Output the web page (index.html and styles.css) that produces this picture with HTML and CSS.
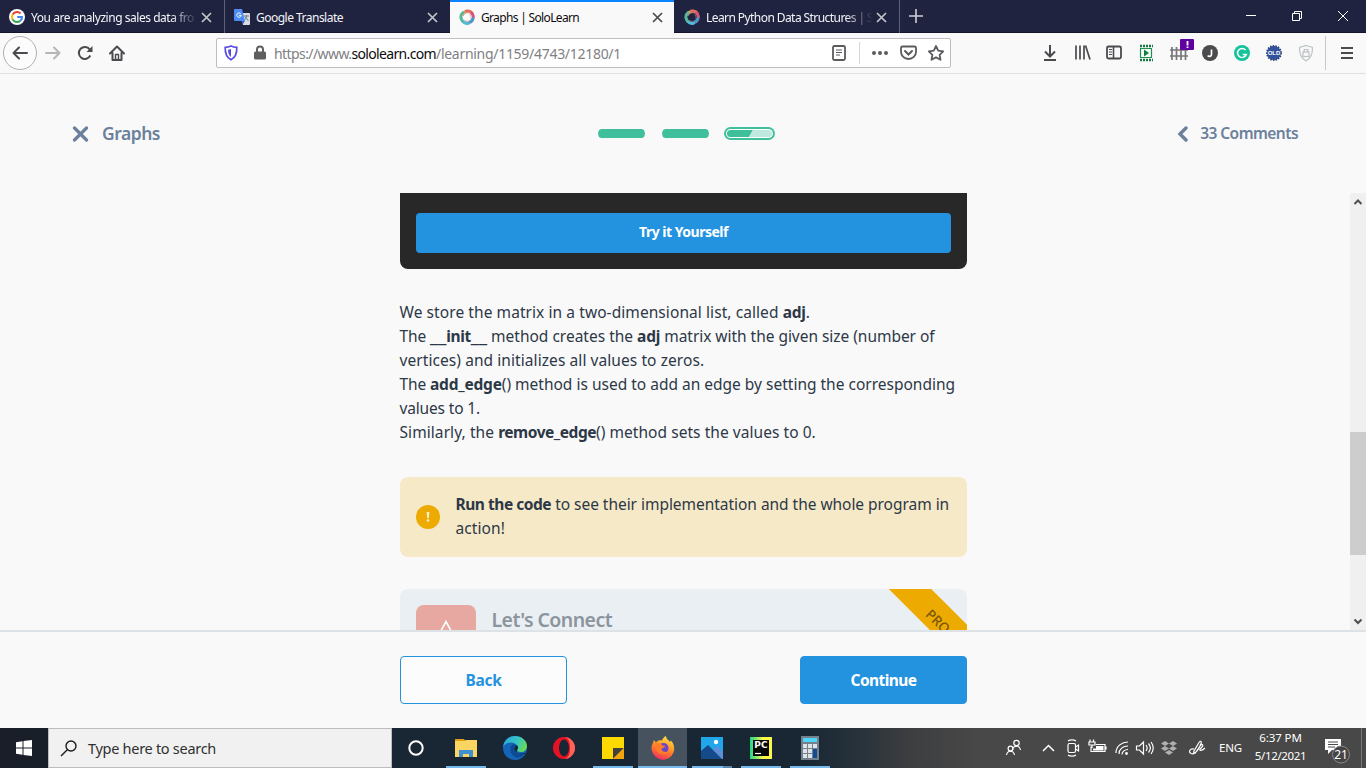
FILE: index.html
```
<!DOCTYPE html>
<html lang="en">
<head>
<meta charset="utf-8">
<title>Graphs | SoloLearn</title>
<link rel="stylesheet" href="styles.css">
</head>
<body>
<svg width="0" height="0" class="defs">
  <defs>
    <g id="swirl" fill="none" stroke-width="2.700" stroke-linecap="round">
      <path d="M3 5.500C5 2 9 1.400 12 3" stroke="#e8a254"/><path d="M7 2C11 1 14.500 4 14.300 7.500" stroke="#e56b5d"/>
      <path d="M12.500 4C15.500 7 14.500 11 12 13" stroke="#d9537c"/><path d="M14 9.500C12.500 14 8.500 15 5.500 13.700" stroke="#3a9fd0"/>
      <path d="M9.500 14.500C4.500 15 2 11.500 2 8.500" stroke="#55bcd8"/><path d="M3.500 12C.8 9 1.500 5.500 4 3.500" stroke="#52b99b"/>
      <path d="M4 7C5 4.500 7 3.500 9 3.700M10 4.500C12 6 12.500 8 12 10M11 11.500C9.500 13 7 12.700 5.500 11.500" stroke="#b98a8a" stroke-width=".7"/>
    </g>
    <g id="x" fill="none" stroke-width="1.700"><path d="M1 1l9 9M10 1l-9 9"/></g>
  </defs>
</svg>
<div class="screen">
  <div class="tabs">
    <div class="tab">
      <svg class="fav" viewBox="0 0 16 16"><circle cx="8" cy="8" r="8" fill="#fff"/><g fill="none" stroke-width="2"><path d="M11.600 4.500A5 5 0 0 0 3.600 5.600" stroke="#ea4335"/><path d="M3.600 5.600a5 5 0 0 0 0 4.800" stroke="#fbbc05"/><path d="M3.600 10.400a5 5 0 0 0 7.700 1.400" stroke="#34a853"/><path d="M11.300 11.800A5 5 0 0 0 13 8H8.200" stroke="#4285f4"/></g></svg>
      <span class="title fade t-query">You are analyzing sales data fro</span>
      <svg class="close" viewBox="0 0 11 11" stroke="#c4c4cc"><use href="#x"/></svg>
    </div>
    <div class="tab">
      <svg class="fav" viewBox="0 0 16 16"><path d="M7 4h8a1 1 0 0 1 1 1v10a1 1 0 0 1-1 1H9z" fill="#dadce0"/><path d="M1 0h7l3 12H1a1 1 0 0 1-1-1V1a1 1 0 0 1 1-1z" fill="#4c8bf5"/><path d="M7.500 12H11l-2 3z" fill="#3367d6"/><path d="M6.700 4.700a2.200 2.200 0 1 0 .5 1.600H5" fill="none" stroke="#fff"/><path d="M10 7h5M12.500 6v1c0 2-1 3-2 4M11.500 8l3 4" fill="none" stroke="#6d7b8c"/></svg>
      <span class="title t-translate">Google Translate</span>
      <svg class="close" viewBox="0 0 11 11" stroke="#c4c4cc"><use href="#x"/></svg>
    </div>
    <div class="tab active">
      <svg class="fav" viewBox="0 0 16 16"><use href="#swirl"/></svg>
      <span class="title t-graphs">Graphs | SoloLearn</span>
      <svg class="close" viewBox="0 0 11 11" stroke="#4a4a4f"><use href="#x"/></svg>
    </div>
    <div class="tab last">
      <svg class="fav" viewBox="0 0 16 16"><use href="#swirl"/></svg>
      <span class="title fade t-learn">Learn Python Data Structures | S</span>
      <svg class="close" viewBox="0 0 11 11" stroke="#c4c4cc"><use href="#x"/></svg>
    </div>
    <svg class="plus" viewBox="0 0 14 14"><path d="M7 0v14M0 7h14" stroke="#d0d0d8" stroke-width="1.600"/></svg>
    <svg class="winctl" viewBox="0 0 104 12" fill="none" stroke="#fff"><path d="M0 5.500h10M46.500 3.500h7v7h-7zM48.500 3.500v-2h7v7h-2M92 1l10 10M102 1L92 11"/></svg>
  </div>

  <div class="toolbar">
    <div class="nav">
      <span class="back"><svg width="16" height="14" viewBox="0 0 16 14" fill="none" stroke="#4a4a4f" stroke-width="2" stroke-linecap="round" stroke-linejoin="round"><path d="M15 7H1.500M7 1.500L1.500 7 7 12.500"/></svg></span>
      <svg width="16" height="14" viewBox="0 0 16 14" fill="none" stroke="#b6b6b8" stroke-width="2" stroke-linecap="round" stroke-linejoin="round"><path d="M1 7h13.500M9 1.500L14.500 7 9 12.500"/></svg>
      <svg width="16" height="16" viewBox="0 0 16 16" fill="none" stroke="#4a4a4f" stroke-width="2"><path d="M13.300 10.500A6 6 0 1 1 12.700 4.300"/><path d="M15.500 1v6H9.500z" fill="#4a4a4f" stroke="none"/></svg>
      <svg width="16" height="16" viewBox="0 0 16 16" fill="none" stroke="#4a4a4f" stroke-width="2" stroke-linejoin="round" stroke-linecap="round"><path d="M1 8.500L8 1.500l7 7M3.500 8v7h9V8"/><path d="M6.500 14.500V9.500h3v5h-2" stroke-width="1.400"/></svg>
    </div>
    <div class="urlbar">
      <svg class="shield" width="14" height="16" viewBox="0 0 14 16"><path d="M7 1C9 2 11 2.300 12.800 2.300 13 8 11.500 12.500 7 14.800 2.500 12.500 1 8 1.200 2.300 3 2.300 5 2 7 1z" fill="#fff" stroke="#5a4be0" stroke-width="1.700"/><path d="M7 4c-1 .4-2 .6-3 .7.1 3.300.9 5.800 3 7.300z" fill="#5150dc"/></svg>
      <svg class="lock" width="12" height="15" viewBox="0 0 12 15"><rect y="6.500" width="12" height="8" rx="1.500" fill="#5f5f61"/><path d="M3 7V4.500a3 3 0 0 1 6 0V7" fill="none" stroke="#5f5f61" stroke-width="2"/></svg>
      <span class="url"><span class="scheme">https://www.</span><b>sololearn.com</b><span class="path">/learning/1159/4743/12180/1</span></span>
      <svg class="urlicons" width="112" height="24" viewBox="0 0 112 24" fill="none" stroke="#5b5b5f" stroke-width="1.800"><rect x="1" y="5" width="12" height="14" rx="1.500"/><path d="M4 9h6M4 11.500h6M4 14h4" stroke-width="1"/><path d="M27.500 1v22" stroke="#d7d7db" stroke-width="1"/><g fill="#5b5b5f" stroke="none"><circle cx="42" cy="12" r="2"/><circle cx="48" cy="12" r="2"/><circle cx="54" cy="12" r="2"/></g><path d="M70.500 5.500h12a1.500 1.500 0 0 1 1.500 1.500v4a7.500 7 0 0 1-15 0V7a1.500 1.500 0 0 1 1.500-1.500z"/><path d="M73 10l3.500 3.500L80 10" stroke-linecap="round" stroke-width="2"/><path d="M104 5l2.200 4.600 5 .7-3.600 3.500.9 5-4.500-2.400-4.500 2.400.9-5-3.600-3.500 5-.7z" stroke-linejoin="round"/></svg>
    </div>
    <svg class="ext" width="322" height="34" viewBox="0 0 322 34" fill="none" stroke="#4a4a4f" stroke-width="2">
      <path d="M8 9v11M3 15.500L8 20.500l5-5M2 24h12"/>
      <path d="M34 9.500v14M38 9.500v14M42 9.500v14M43.500 9.500L48 23.500" stroke-width="1.700"/>
      <rect x="65" y="10.500" width="14" height="12" rx="1.500" stroke-width="1.800"/><path d="M71.500 10v13" stroke-width="1.600"/><path d="M67 13.500h3M67 16h3M67 18.500h3" stroke-width="1"/>
      <path d="M98.500 13v8M109.500 13v8" stroke="#1d9150" stroke-width="1.200"/><path d="M98 12.500h12M98 21.500h12" stroke="#1d9150" stroke-width="1"/><path d="M98 10h13M98 24h13" stroke="#157a3f" stroke-width="2.500" stroke-dasharray="2 1"/><path d="M102 13.500v7l5-3.500z" fill="#0c8140" stroke="none"/>
      <path d="M130 11v13M134.500 11v13M139 11v13M143.500 11v13M128 14h18M128 20h18" stroke="#77777b" stroke-width="1.700"/>
      <rect x="138" y="3" width="14" height="11" rx="1" fill="#60009e" stroke="none"/><path d="M145.500 5v4.500M145.500 10.500V12" stroke="#fff" stroke-width="1.800"/>
      <circle cx="168" cy="17" r="8" fill="#4b4b4d" stroke="none"/><path d="M169.500 13.500v5a2 2 0 0 1-3.700 1" stroke="#fff" stroke-width="1.700"/>
      <circle cx="200" cy="17" r="8" fill="#15c39a" stroke="none"/><path d="M203.500 14a4.500 4.500 0 1 0 .8 4.500h-3.500" stroke="#fff" stroke-width="1.500"/>
      <circle cx="232" cy="17" r="7" fill="#30539b" stroke="none"/><circle cx="232" cy="17" r="7.200" stroke="#253c72" stroke-dasharray="1.500 1.200" stroke-width="1.500"/><text x="232" y="19.200" text-anchor="middle" class="old">OLD</text>
      <path d="M264 9.500l6.500 2c.2 6-1 10.500-6.500 13.500-5.500-3-6.700-7.500-6.500-13.500z" stroke="#bcc4c4" stroke-width="1.200"/><rect x="261" y="16" width="6" height="4.500" stroke="#bcc0c2" stroke-width="1.200"/><path d="M262.200 16v-2.500h3.600V16" stroke="#bcc0c2" stroke-width="1.200"/>
      <path d="M283.500 0v34" stroke="#c8c8ca" stroke-width="1"/>
      <path d="M299 12h12M299 17h12M299 22h12"/>
    </svg>
  </div>

  <div class="lesson-head">
    <svg class="quit" width="17" height="16" viewBox="-.5 0 17 16"><path d="M2 2l12 12M14 2L2 14" stroke="#6b809a" stroke-width="3.200" stroke-linecap="round"/></svg>
    <span class="topic">Graphs</span>
    <div class="steps"><i class="step"></i><i class="step"></i><i class="step current"><i></i></i></div>
    <div class="comments"><svg width="11" height="16" viewBox="0 0 11 16"><path d="M9 2L3 8l6 6" fill="none" stroke="#6b809a" stroke-width="3.400" stroke-linecap="round"/></svg><span>33 Comments</span></div>
  </div>

  <div class="scroll">
    <div class="content">
      <div class="code"><button class="try">Try it Yourself</button></div>
      <div class="prose">
        <p><span class="wider">We store the matrix in a two-dimensional list, called </span><b>adj</b>.</p>
        <p><span class="the">The </span><b class="dunder"><i>__</i>init<i>__</i></b> method creates the <b>adj</b><span class="snug"> matrix with the given size (number of</span></p>
        <p><span class="wider">vertices) and initializes all values to zeros.</span></p>
        <p><span class="the">The </span><b>add_edge</b><span>() method is used to add an edge by setting the corresponding</span></p>
        <p><span class="tight">values to 1.</span></p>
        <p><span class="wider">Similarly, the </span><b class="tightest">remove_edge</b><span class="wide">() method sets the values to 0.</span></p>
      </div>
      <div class="note">
        <svg width="24" height="24" viewBox="0 0 24 24"><circle cx="12" cy="12" r="12" fill="#edaa00"/><path d="M10.600 7h2.800l-.6 6.200h-1.600z" fill="#f8ecd0"/><circle cx="12" cy="15.500" r="1.300" fill="#f8ecd0"/></svg>
        <div><p><b class="tightest">Run the code</b><span class="snug"> to see their implementation and the whole program in</span></p><p><span class="wider">action!</span></p></div>
      </div>
      <div class="card">
        <div class="badge"><svg width="20" height="20" viewBox="0 0 20 20"><path d="M3.500 13.500L10 1.500l6.500 12" fill="none" stroke="#fff" stroke-width="1.600"/></svg></div>
        <span class="cardtitle">Let's Connect</span>
        <div class="ribbon">PRO</div>
      </div>
    </div>
    <div class="scrollbar"><svg width="16" height="17" viewBox="0 0 16 17"><path d="M4.500 11L8 7.500l3.500 3.500" fill="none" stroke="#505050" stroke-width="2"/></svg><i class="thumb"></i><svg width="16" height="17" viewBox="0 0 16 17"><path d="M4.500 6.500L8 10l3.500-3.500" fill="none" stroke="#505050" stroke-width="2"/></svg></div>
  </div>

  <div class="actions"><button class="btn">Back</button><button class="btn primary">Continue</button></div>

  <div class="taskbar">
    <div class="start"><svg width="16" height="16" viewBox="0 0 16 16" fill="#fff"><path d="M0 2.200L6.500 1.300V7.500H0zM7.500 1.100L16 0v7.500H7.500zM0 8.500h6.500v6.200L0 13.800zM7.500 8.500H16V16l-8.500-1.100z"/></svg></div>
    <div class="search"><svg width="17" height="17" viewBox="0 0 17 17" fill="none" stroke="#1b1b1b" stroke-width="1.400"><circle cx="11" cy="6" r="5"/><path d="M7.300 9.700L1 16"/></svg><span>Type here to search</span></div>
    <div class="apps">
      <div class="app cortana"><svg width="24" height="24" viewBox="0 0 24 24"><circle cx="12" cy="12" r="6.700" fill="none" stroke="#fff" stroke-width="2"/></svg></div>
      <div class="app run"><svg width="24" height="24" viewBox="0 0 24 24"><path d="M1 3h9l1.500 2H1z" fill="#e0a012"/><path d="M1 5h9l2-1h11v17H1z" fill="#fcd462"/><path d="M5 21v-7h14v7h-4v-3H9v3z" fill="#3f90d2"/></svg></div>
      <div class="app"><svg width="24" height="24" viewBox="0 0 24 24"><defs><linearGradient id="eg" x1="0" x2="1" y1=".2" y2=".5"><stop stop-color="#2ba7df"/><stop offset=".6" stop-color="#36c6c0"/><stop offset="1" stop-color="#6ada55"/></linearGradient></defs><circle cx="12" cy="12" r="12" fill="#1464b8"/><path d="M0 11C1 4 6 0 12 0c7 0 12 5 12 10 0 4-3 6-6 6-3 0-4-1-4-2 1-1 1-2 1-3C14 8 11 6.500 8 6.500 4 6.500 1 9 0 11z" fill="url(#eg)"/><path d="M9 9c-3 3-2 9 3 12 4 2 8-1 10-4-4 2-9 1-10-3-.4-2 1-3 1.500-3.500C13 8.500 10.500 8 9 9z" fill="#0c4a91"/><path d="M14 14c1-1 1-2 1-3-.5-1.500-1.800-1.800-2.500-1-1 1.500-1 3-.3 4.500 1.800 3.500 7.800 3.500 10.500 2l-.5 1.200C18 19 13 17 14 14z" fill="#182733"/></svg></div>
      <div class="app"><svg width="24" height="24" viewBox="0 0 24 24"><ellipse cx="12" cy="12" rx="11" ry="11" fill="#e61224"/><path d="M12 1a11 11 0 0 1 0 22c5-1 6-6 6-11S17 2 12 1z" fill="#ff6357"/><ellipse cx="12" cy="12" rx="5" ry="8.500" fill="#182733"/></svg></div>
      <div class="app run"><svg width="24" height="24" viewBox="0 0 24 24"><path d="M1 1h22v22H1z" fill="#ffd900"/><path d="M12 12h11L12 23z" fill="#43413b"/><path d="M23 12v11H12z" fill="#f2a60c"/></svg></div>
      <div class="app run on"><svg width="24" height="24" viewBox="0 0 24 24"><defs><linearGradient id="fg" x1=".7" x2=".3" y1="0" y2="1"><stop stop-color="#ffe546"/><stop offset=".5" stop-color="#ff8b25"/><stop offset="1" stop-color="#f52961"/></linearGradient></defs><path d="M1.500 8L3 4l2 2.500C7 4 9 4 11 4.500 11.500 2.500 13 1 15 0c0 3 3 4 4 6l1-1.500c3 3 4 8 2.500 12A11.300 11.300 0 0 1 1 15C0 12 .5 10 1.500 8z" fill="url(#fg)"/><circle cx="12.500" cy="12" r="5" fill="#6947c7"/><path d="M4 7c3 0 6 0 7.500 2.500l3 .5c-1 2-3 1.500-4 3 0 3 5 4 8 2-2 4-8 5-11.500 1C4 13 3.500 9 4 7z" fill="#ff7c29"/></svg></div>
      <div class="app run split"><svg width="24" height="24" viewBox="0 0 24 24"><path d="M1 1h22v22H1z" fill="#22a6eb"/><path d="M11 16l6-6 6 6v7H8z" fill="#5e8ed8"/><path d="M1 15l7-6 14 14H1z" fill="#144a8a"/><circle cx="16" cy="6" r="2.200" fill="#fff"/></svg></div>
      <div class="app run"><svg width="24" height="24" viewBox="0 0 24 24"><defs><linearGradient id="pg"><stop stop-color="#21d789"/><stop offset=".6" stop-color="#fcf84a"/></linearGradient></defs><path d="M1 1h22v22H1z" fill="url(#pg)"/><path d="M4 4h16v16H4z" fill="#080808"/><path d="M6 17.500h6" stroke="#fff" stroke-width="1.200"/><text x="5.300" y="12" class="pc">PC</text></svg></div>
      <div class="app run"><svg width="24" height="24" viewBox="0 0 24 24"><path d="M3 0h18v24H3z" fill="#74818c"/><path d="M5 2h14v4H5z" fill="#4fd5fa"/><path d="M5 8h4v4H5zM10 8h4v4h-4zM15 8h4v4h-4zM5 13h4v4H5zM10 13h4v4h-4zM5 18h4v4H5zM10 18h4v4h-4z" fill="#dce4ea"/><path d="M15 13h4v9h-4z" fill="#124b91"/></svg></div>
    </div>
    <div class="tray">
      <svg width="204" height="24" viewBox="0 0 204 24" fill="none" stroke="#fff" stroke-width="1.200">
        <circle cx="11.500" cy="7" r="2.700"/><path d="M7.500 14c1-5 7-5 8 0"/><circle cx="5.500" cy="12.500" r="2.400"/><path d="M1.500 19c1-5 7-5 8 0"/>
        <path d="M38 15l5.500-5.500L49 15" stroke-width="1.500"/>
        <rect x="63" y="7.500" width="7.500" height="9" rx="1.500"/><path d="M70.500 11l3-2v6l-3-2M63 5c2-1.500 6-1.500 8 0M63 19c2 1.500 6 1.500 8 0"/>
        <path d="M91 8.500h9v7H86v-5M84 6h6v3h-6zM85 3.500V6M88.500 3.500V6M87 9v3M101 10.500v3"/><path d="M91 10h7.500v4.500H88v-2h3z" fill="#fff" stroke="none"/>
        <path d="M111 17C111 10 117 6 123 6M114 18C114 13 118 10 123 10M117 18.500C117 15.500 120 13.500 123 13.500"/><circle cx="121.500" cy="17.500" r="1.400" fill="#fff" stroke="none"/>
        <path d="M131.500 10h3l4-4v12l-4-4h-3zM141 9c1.500 2 1.500 4 0 6M143.500 7.500c2.500 3 2.500 6 0 9M146 6c3 4 3 8 0 12"/>
        <path d="M156 7.500l4-2.500 4 2.500-4 2.500zM164 7.500l4-2.500 4 2.500-4 2.500zM156 12.500l4-2.500 4 2.500-4 2.500zM164 12.500l4-2.500 4 2.500-4 2.500zM160 16.500l4-2.500 4 2.500-4 2.500z" fill="#b0b0b0" stroke="none"/>
        <path d="M189 13c-4-1-6 3-3 4.500 5 2 9-7 10-10 1-2.500-1-3-2-1l-5 8.500c-1 3 1 3 2 1l4-6c2-3 4-1 2 1l-2 2c-1 2 2 2 5-1"/>
      </svg>
      <span class="lang">ENG</span>
      <div class="clock"><span class="time">6:37 PM</span><span class="date">5/12/2021</span></div>
      <svg class="notif" width="28" height="28" viewBox="0 0 28 28"><path d="M1 2h16v11H8l-4 4v-4H1z" fill="#fff"/><path d="M4 5h10M4 7.500h10M4 10h7" stroke="#4a4a4a"/><circle cx="17" cy="17.500" r="8.500" fill="#444" stroke="#8a8a8a"/><text x="17" y="21.500" text-anchor="middle" class="cnt">21</text></svg>
    </div>
  </div>
</div>
</body>
</html>
```
FILE: styles.css
```
* { box-sizing: border-box; }
body { margin: 0; font-family: "Noto Sans", sans-serif; overflow: hidden; }
.defs { position: absolute; }
.screen { width: 1366px; height: 768px; display: flex; flex-direction: column; background: #f9f9fa; overflow: hidden; }
svg { display: block; flex: none; }
p { margin: 0; white-space: pre; }

/* Browser tabs */
.tabs { height: 33px; flex: none; display: flex; align-items: center; background: #202340; border-bottom: 1px solid #121429; }
.tab { width: 225px; height: 33px; flex: none; display: flex; align-items: center; padding: 2px 12px 0 9px; color: #f4f4f8; font-size: 12px; border-right: 1px solid #5d5f76; }
.tab:nth-child(2) { border-right: 0; }
.tab.active { width: 224px; padding: 0 11px 0 9px; background: #f9f9fa; color: #0c0c0d; border-top: 2px solid #0a84ff; border-right: 0; }
.tab.last { width: 226px; padding-left: 10px; }
.fav { width: 16px; height: 16px; margin-right: 6px; }
.title { flex: 1; overflow: hidden; white-space: pre; }
.t-query { letter-spacing: -.463px; }
.t-translate { letter-spacing: -.515px; }
.t-graphs { letter-spacing: -.664px; }
.t-learn { letter-spacing: -.572px; }
.fade { -webkit-mask-image: linear-gradient(90deg, #000 82%, transparent 98%); mask-image: linear-gradient(90deg, #000 82%, transparent 98%); }
.close { width: 11px; height: 11px; }
.plus { width: 14px; height: 14px; margin-left: 9px; }
.winctl { width: 104px; height: 12px; margin-left: auto; margin-right: 16px; }

/* Navigation toolbar */
.toolbar { height: 41px; flex: none; display: flex; align-items: center; border-bottom: 1px solid #e0e0e2; padding-left: 3px; }
.nav { width: 213px; display: flex; align-items: center; gap: 16px; }
.nav > svg:nth-child(2) { margin-left: -8px; }
.back { width: 34px; height: 34px; border: 1px solid #b0b0b2; border-radius: 50%; display: flex; align-items: center; justify-content: center; background: #fcfcfc; }
.urlbar { width: 735px; height: 30px; border: 1px solid #bebec1; border-radius: 2px; background: #fff; display: flex; align-items: center; padding: 0 6px 0 7px; }
.lock { margin: 0 8px 2px 16px; }
.url { font-size: 14px; color: #808084; white-space: pre; }
.url b { color: #0c0c0d; font-weight: 400; letter-spacing: -.661px; }
.scheme { letter-spacing: -.579px; }
.path { letter-spacing: -.29px; }
.urlicons { margin-left: auto; }
.ext { margin-left: 91px; }
.old { font: bold 6px "Liberation Sans", sans-serif; fill: #fff; stroke: none; }

/* Lesson header */
.lesson-head { height: 119px; flex: none; display: grid; grid-template-columns: 30px 495px auto 1fr; align-items: center; padding: 0 68px 0 72px; color: #6b809a; font-weight: 600; }
.topic { font-size: 17.500px; letter-spacing: -.49px; margin-top: -2px; }
.steps { display: flex; gap: 15px; align-items: center; }
.step { width: 49px; height: 9px; border: solid #f9f9fa; border-width: 0 1px; border-radius: 5px; background: #3fbf9c; background-clip: padding-box; }
.step.current { width: 51px; height: 13px; margin-left: -1px; border: 2px solid #3fbf9c; border-radius: 7px; padding: 1px; background: #fff; }
.step.current i { display: block; height: 7px; border-radius: 4px; background: linear-gradient(120deg, #3fbf9c 52%, #bfe9de 53%); }
.comments { justify-self: end; display: flex; align-items: center; gap: 12px; font-size: 15.500px; letter-spacing: -.55px; }
.comments span { margin-top: -1px; }

/* Lesson content */
.scroll { height: 437px; flex: none; display: flex; justify-content: space-between; overflow: hidden; padding-left: 400px; }
.content { width: 567px; display: flex; flex-direction: column; }
.code { height: 76px; flex: none; background: #282828; padding: 20px 16px; border-radius: 0 0 8px 8px; }
button { font-family: inherit; padding: 0; }
.try { display: block; width: 100%; height: 40px; border: 0; border-radius: 4px; background: #2493df; color: #fff; font-weight: 700; font-size: 14px; letter-spacing: -.489px; padding-bottom: 3px; }
.prose { margin: 31px 0 33px -.5px; color: #2d3846; font-size: 15.500px; line-height: 24px; }
.prose b { letter-spacing: -.2px; }
.the { letter-spacing: -.12px; }
.wide { letter-spacing: .05px; }
.wider { letter-spacing: .075px; }
.snug { letter-spacing: -.036px; }
.tight { letter-spacing: -.156px; }
.prose .tightest, .tightest { letter-spacing: -.46px; }
.prose .dunder { letter-spacing: -.4px; }
.dunder i { font-style: normal; font-size: 19.800px; line-height: 0; letter-spacing: 0; }
.note { height: 80px; flex: none; border-radius: 8px; background: #f6e9c8; display: flex; align-items: center; gap: 15.500px; padding: 0 16px; color: #2d3846; font-size: 15.500px; line-height: 24px; }
.note div { margin-top: -3px; }
.card { height: 120px; flex: none; margin-top: 32px; border-radius: 8px; background: #eaeff3; display: flex; padding: 16px; gap: 15.500px; position: relative; overflow: hidden; }
.badge { width: 60px; height: 60px; border-radius: 8px; background: #e6a8a0; display: flex; justify-content: center; padding-top: 15px; }
.cardtitle { font-size: 19.500px; line-height: 30px; font-weight: 600; letter-spacing: -.563px; color: #8c959e; }
.ribbon { position: absolute; width: 140px; height: 30px; right: -46px; top: 18px; transform: rotate(45deg); background: #edaa00; color: #76560c; font-size: 13.500px; line-height: 37px; text-align: center; padding-right: 8px; font-weight: 500; }
.scrollbar { width: 16px; background: #f0f0f0; display: flex; flex-direction: column; }
.thumb { height: 123px; margin: 222px 0 auto; background: #cdcdcd; }

.actions { height: 98px; flex: none; border-top: 2px solid #dde2e6; display: flex; justify-content: space-between; padding: 24px 399px 0 400px; }
.btn { width: 167px; height: 48px; border: 1px solid #2493df; border-radius: 4px; background: #fcfcfd; color: #2493df; font-size: 15.500px; font-weight: 700; letter-spacing: -.301px; }
.btn.primary { background: #2493df; color: #fff; letter-spacing: -.561px; }

/* Windows taskbar */
.taskbar { height: 40px; flex: none; display: flex; background: linear-gradient(90deg, #191e28 0, #182733 390px, #182733 800px, #24303a 850px, #3d3e40 910px, #484848 980px); }
.start { width: 48px; display: flex; align-items: center; justify-content: center; }
.search { width: 344px; background: #f1f1f1; border: 1px solid #bdbdbd; display: flex; align-items: center; padding-left: 11px; gap: 11px; font-size: 14.500px; letter-spacing: -.289px; color: #303030; }
.apps { display: flex; }
.app { width: 49.200px; display: flex; flex-direction: column; align-items: center; padding-top: 8px; }
.cortana { padding-right: 2px; }
.app.run::after { content: ""; width: 40px; height: 2px; margin-top: 6px; background: #76b9ed; }
.app.on { background: #46535e; }
.app.on::after { width: 100%; }
.app.split::after { background: linear-gradient(90deg, #76b9ed 31px, #5888ae 31px); }
.tray { margin: 0 4px 0 auto; border-right: 1px solid #777; display: flex; align-items: center; color: #fff; font-size: 11.500px; padding-right: 9px; }
.lang { margin: 0 13px 1px 10px; letter-spacing: -.172px; }
.clock { display: flex; flex-direction: column; align-items: center; line-height: 18px; width: 51px; margin-top: -2px; white-space: pre; }
.time { letter-spacing: -.1px; }
.date { letter-spacing: -.345px; }
.notif { margin-left: 18px; margin-top: 6px; }
.pc { font: bold 9px "DejaVu Sans", sans-serif; fill: #fff; }
.cnt { font: 12px "Noto Sans", sans-serif; fill: #fff; }
```
